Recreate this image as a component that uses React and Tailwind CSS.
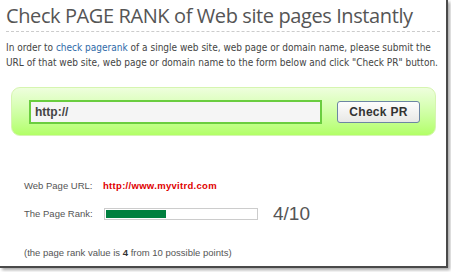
import React from 'react';

const App = () => {
  return (
    <div className="w-[451px] h-[272px] bg-white overflow-hidden">
      <div className="w-[448px] h-[268px] bg-white border-r-2 border-b-2 border-[#4a4a4a] shadow-[2px_2px_3px_rgba(0,0,0,0.35)]">
        <h1
          className="pl-[6px] pt-[4px] text-[20px] leading-[24px] tracking-[-0.4px] font-medium text-[#555] whitespace-nowrap"
          style={{ fontFamily: '"Open Sans", sans-serif' }}
        >
          Check PAGE RANK of Web site pages Instantly
        </h1>
        <div className="mx-[6px] mt-[3px] border-t border-dashed border-[#ccc]" />

        <p
          className="px-[6px] mt-[8px] text-[10px] leading-[15px] text-[#444] whitespace-nowrap font-stretch-condensed"
          style={{ fontFamily: '"DejaVu Sans Condensed", "DejaVu Sans", sans-serif' }}
        >
          In order to <span className="text-[#2f6aa8]">check pagerank</span> of a single web site, web page or domain name, please submit the
          <br />
          URL of that web site, web page or domain name to the form below and click "Check PR" button.
        </p>

        <div className="ml-[11px] mt-[17px] w-[425px] h-[49px] rounded-[9px] border border-[#d6f5b0] bg-gradient-to-b from-[#eefedd] to-[#b2ff66] flex items-center pl-[17px] pr-[15px]">
          <div
            className="w-[293px] h-[24px] border-2 border-[#6acd3f] bg-[#f5f5f5] flex items-center pl-[4px] text-[12px] font-bold text-[#444]"
            style={{ fontFamily: '"Liberation Sans", Arial, sans-serif' }}
          >
            http://
          </div>
          <button
            className="ml-auto w-[83px] h-[22px] rounded-[3px] border border-[#6c86a3] bg-gradient-to-b from-[#fdfdfd] to-[#e8e8e6] text-[12px] font-bold text-[#333] tracking-[0.3px]"
            style={{ fontFamily: '"Liberation Sans", Arial, sans-serif' }}
          >
            Check PR
          </button>
        </div>

        <div
          className="pl-[24px] mt-[43px] text-[9.5px] text-[#555]"
          style={{ fontFamily: '"Liberation Sans", Arial, sans-serif' }}
        >
          <div className="flex items-center h-[14px]">
            <span className="w-[79px]">Web Page URL:</span>
            <span className="text-[#e00000] font-bold tracking-[0.3px]">http://www.myvitrd.com</span>
          </div>
          <div className="flex items-center mt-[13px] h-[16px]">
            <span className="w-[80px]">The Page Rank:</span>
            <div className="w-[154px] h-[12px] border border-[#ccc] bg-white p-px">
              <div className="h-full bg-[#00803f]" style={{ width: '40%' }} />
            </div>
            <span
              className="ml-[15px] text-[19px] text-[#555]"
              style={{ fontFamily: '"Liberation Sans", Arial, sans-serif' }}
            >
              4/10
            </span>
          </div>
          <div className="mt-[24px]">
            (the page rank value is <b className="text-[#333]">4</b> from 10 possible points)
          </div>
        </div>
      </div>
    </div>
  );
};

export default App;
